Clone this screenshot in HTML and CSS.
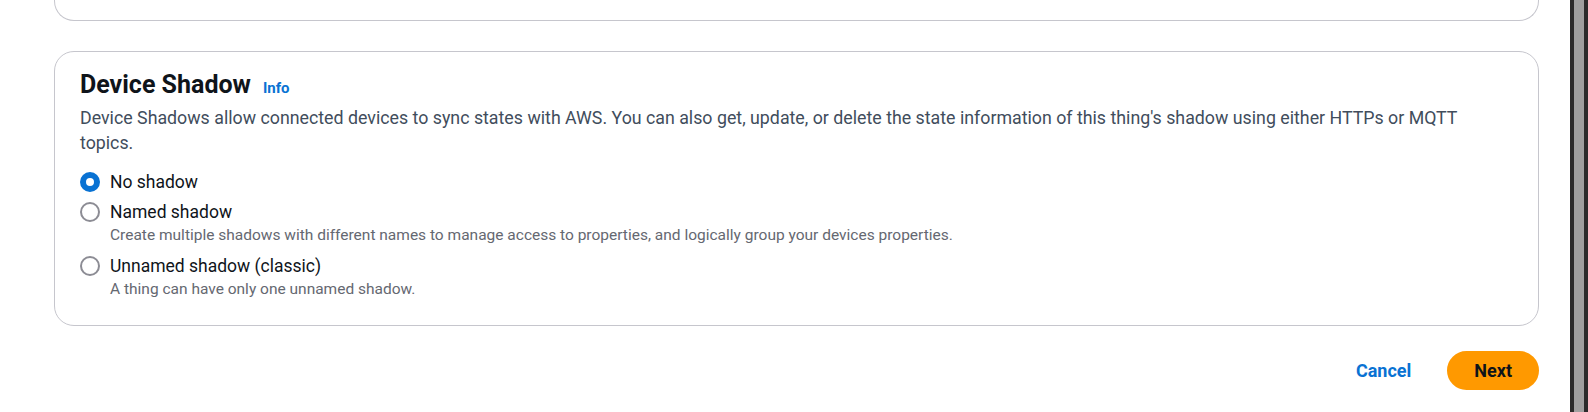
FILE: index.html
```html
<!DOCTYPE html>
<html lang="en">
<head>
    <meta charset="UTF-8">
    <meta name="viewport" content="width=device-width, initial-scale=1.0">
    <title>Create thing - Device Shadow</title>
    <link rel="stylesheet" href="styles.css">
</head>
<body>
    <div class="page">
        <div class="container container-prev"></div>

        <div class="container">
            <div class="header">
                <h2>Device Shadow</h2>
                <a href="#" class="info">Info</a>
            </div>
            <p class="description">Device Shadows allow connected devices to sync states with AWS. You can also get, update, or delete the state information of this thing's shadow using either HTTPs or MQTT topics.</p>

            <div class="radio-group">
                <label class="radio-item">
                    <span class="radio checked"></span>
                    <span class="radio-text">
                        <span class="radio-label">No shadow</span>
                    </span>
                </label>
                <label class="radio-item">
                    <span class="radio"></span>
                    <span class="radio-text">
                        <span class="radio-label">Named shadow</span>
                        <span class="radio-desc">Create multiple shadows with different names to manage access to properties, and logically group your devices properties.</span>
                    </span>
                </label>
                <label class="radio-item">
                    <span class="radio"></span>
                    <span class="radio-text">
                        <span class="radio-label">Unnamed shadow (classic)</span>
                        <span class="radio-desc">A thing can have only one unnamed shadow.</span>
                    </span>
                </label>
            </div>
        </div>

        <div class="actions">
            <a href="#" class="btn btn-link">Cancel</a>
            <a href="#" class="btn btn-primary">Next</a>
        </div>
    </div>

    <div class="scrollbar"><div class="thumb"></div></div>
</body>
</html>
```

FILE: styles.css
```css
body {
    font-family: Roboto, "Open Sans", sans-serif;
    margin: 0;
    padding: 0;
    background-color: #fff;
    color: #0f141a;
    display: flex;
    height: 412px;
    overflow: hidden;
}

.page {
    flex: 1;
    padding: 0 31px 0 54px;
}

.container {
    border: 1px solid #c6c6cd;
    border-radius: 20px;
    padding: 18px 28px 22px 25px;
    margin-top: 30px;
}

.container-prev {
    height: 20px;
    padding: 0;
    margin-top: 0;
    border-top: none;
    border-radius: 0 0 20px 20px;
}

.header {
    display: flex;
    align-items: baseline;
}

.header h2 {
    margin: 0;
    font-size: 25px;
    line-height: 30px;
    font-weight: 700;
    color: #0f141a;
}

.info {
    margin-left: 12px;
    font-size: 15px;
    font-weight: 700;
    color: #0972d3;
    text-decoration: none;
}

.description {
    margin: 5px 0 0;
    font-size: 17.8px;
    line-height: 25px;
    color: #414d5c;
}

.radio-group {
    margin-top: 15px;
    display: flex;
    flex-direction: column;
    gap: 5px;
}

.radio-item {
    display: flex;
    gap: 10px;
}

.radio {
    flex: none;
    width: 20px;
    height: 20px;
    margin-top: 2px;
    box-sizing: border-box;
    border: 2px solid #8c8c94;
    border-radius: 50%;
    background-color: #fff;
}

.radio.checked {
    border: 6px solid #0972d3;
}

.radio-text {
    display: flex;
    flex-direction: column;
}

.radio-label {
    font-size: 17.5px;
    line-height: 25px;
    color: #0f141a;
}

.radio-desc {
    font-size: 15.5px;
    line-height: 20px;
    color: #656871;
    margin-bottom: 4px;
}

.actions {
    display: flex;
    justify-content: flex-end;
    gap: 9px;
    margin-top: 25px;
}

.btn {
    font-size: 18px;
    line-height: 25px;
    font-weight: 700;
    padding: 5px 25px;
    border: 2px solid transparent;
    border-radius: 25px;
    text-decoration: none;
}

.btn-link {
    color: #0972d3;
}

.btn-primary {
    background-color: #ff9900;
    border-color: #ff9900;
    color: #0f141a;
}

.scrollbar {
    flex: none;
    width: 10px;
    background-color: #2c2c2c;
    padding: 0 4px;
}

.thumb {
    height: 100%;
    background-color: #a0a0a0;
}
```
